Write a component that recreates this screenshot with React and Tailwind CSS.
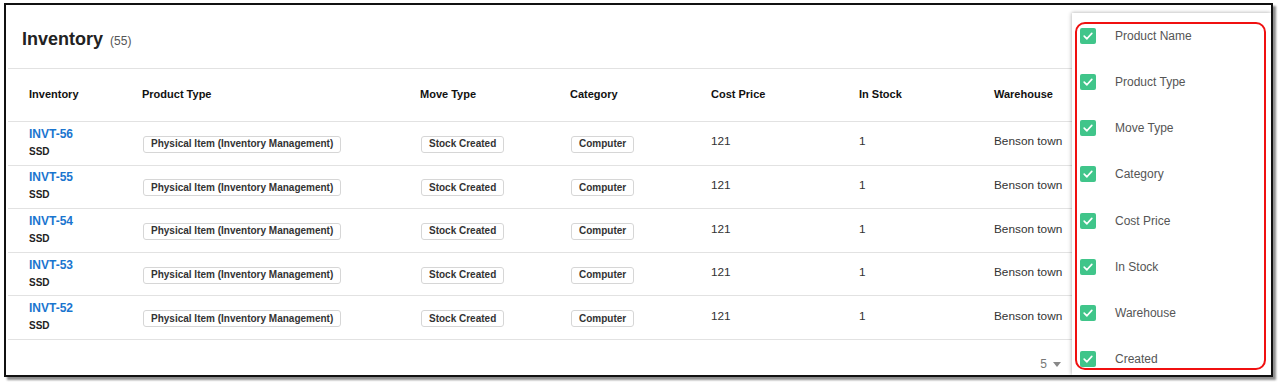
import React from "react";

const rows = ["INVT-56", "INVT-55", "INVT-54", "INVT-53", "INVT-52"];
const cols = [
  { label: "Inventory", w: "w-[113px]" },
  { label: "Product Type", w: "w-[278px]" },
  { label: "Move Type", w: "w-[150px]" },
  { label: "Category", w: "w-[141px]" },
  { label: "Cost Price", w: "w-[148px]" },
  { label: "In Stock", w: "w-[135px]" },
  { label: "Warehouse", w: "w-[140px]" },
];
const menu = [
  "Product Name",
  "Product Type",
  "Move Type",
  "Category",
  "Cost Price",
  "In Stock",
  "Warehouse",
  "Created",
];

function Badge({ children }) {
  return (
    <span className="inline-flex items-center h-[17px] px-[7px] border border-[#d6d6d6] rounded-[3px] text-[10px] font-bold text-[#333] leading-none bg-white ml-[1px]">
      {children}
    </span>
  );
}

function Check() {
  return (
    <span className="w-[16px] h-[16px] rounded-[2px] bg-[#40c58a] flex items-center justify-center shrink-0">
      <svg width="12" height="12" viewBox="0 0 12 12" fill="none">
        <path d="M2.2 6.2 L4.9 8.8 L9.8 3.4" stroke="white" strokeWidth="1.7" strokeLinecap="round" strokeLinejoin="round" />
      </svg>
    </span>
  );
}

export default function App() {
  return (
    <div className="w-[1280px] h-[383px] bg-white overflow-hidden" style={{ fontFamily: '"Liberation Sans", Arial, sans-serif' }}>
      <div className="relative ml-[4px] mt-[3px] w-[1269px] h-[374px] border-2 border-[#111] bg-white shadow-[3px_3px_2px_rgba(0,0,0,0.45)] overflow-hidden">
        <div className="pl-[2px] flex flex-col">
          <div className="h-[64px] border-b border-[#e2e2e2] flex items-center pl-[14px] pt-[6px]">
            <span className="text-[18px] font-bold text-[#222]">Inventory</span>
            <span className="text-[12px] text-[#555] ml-[7px] mt-[3px]">(55)</span>
          </div>
          <div className="h-[53px] border-b border-[#e2e2e2] flex items-center pl-[21px] pb-[1px]">
            {cols.map((c) => (
              <div key={c.label} className={`${c.w} shrink-0 text-[11px] font-bold text-[#111]`}>
                {c.label}
              </div>
            ))}
          </div>
          {rows.map((id) => (
            <div key={id} className="h-[43.6px] border-b border-[#e2e2e2] flex items-center pl-[21px] pb-[2px] shrink-0">
              <div className="w-[113px] shrink-0 flex flex-col">
                <span className="text-[12px] font-bold text-[#1a75cf] leading-[16px]">{id}</span>
                <span className="text-[10px] font-bold text-[#222] leading-[14px] mt-[3px]">SSD</span>
              </div>
              <div className="w-[278px] shrink-0">
                <Badge>Physical Item (Inventory Management)</Badge>
              </div>
              <div className="w-[150px] shrink-0">
                <Badge>Stock Created</Badge>
              </div>
              <div className="w-[141px] shrink-0">
                <Badge>Computer</Badge>
              </div>
              <div className="w-[148px] shrink-0 text-[11.8px] text-[#333]">121</div>
              <div className="w-[135px] shrink-0 text-[11.8px] text-[#333]">1</div>
              <div className="w-[140px] shrink-0 text-[11.8px] text-[#333]">Benson town</div>
            </div>
          ))}
          <div className="h-[36px] flex items-center justify-end pr-[210px]">
            <span className="text-[12px] text-[#777] pt-[12px]">5</span>
            <svg className="ml-[6px] mt-[13px]" width="8" height="5" viewBox="0 0 8 5">
              <path d="M0 0 L8 0 L4 5 Z" fill="#888" />
            </svg>
          </div>
        </div>

        <div className="absolute left-[1066px] top-[8px] right-0 bottom-0 bg-white shadow-[-1px_0_4px_rgba(0,0,0,0.18),0_-1px_3px_rgba(0,0,0,0.12)] flex flex-col pl-[8px]">
          {menu.map((m) => (
            <div key={m} className="h-[46.14px] shrink-0 flex items-center">
              <Check />
              <span className="ml-[19px] text-[12px] text-[#555]">{m}</span>
            </div>
          ))}
        </div>

        <div className="absolute left-[1069px] top-[17px] w-[191px] h-[348px] border-2 border-[#f01010] rounded-[10px] pointer-events-none" />
      </div>
    </div>
  );
}
